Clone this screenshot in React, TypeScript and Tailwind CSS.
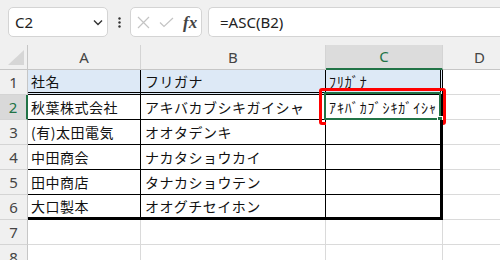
import React from 'react';

const rows = [
  { n: 1, a: '社名', b: 'フリガナ', c: 'ﾌﾘｶﾞﾅ' },
  { n: 2, a: '秋葉株式会社', b: 'アキバカブシキガイシャ', c: 'ｱｷﾊﾞｶﾌﾞｼｷｶﾞｲｼｬ' },
  { n: 3, a: '(有)太田電気', b: 'オオタデンキ', c: '' },
  { n: 4, a: '中田商会', b: 'ナカタショウカイ', c: '' },
  { n: 5, a: '田中商店', b: 'タナカショウテン', c: '' },
  { n: 6, a: '大口製本', b: 'オオグチセイホン', c: '' },
  { n: 7, a: '', b: '', c: '' },
  { n: 8, a: '', b: '', c: '' },
];

const ui = { fontFamily: '"Noto Sans", "Liberation Sans", sans-serif' };
const jp = { fontFamily: '"Noto Sans CJK JP", "Noto Sans", sans-serif' };

function RowCells({ r }: { r: (typeof rows)[number] }) {
  const inTable = r.n <= 6;
  const selected = r.n === 2;
  // bottom border for the table cells
  const bottom =
    r.n === 1
      ? 'border-b-[3px] border-double border-b-black'
      : r.n === 6
      ? 'border-b-[3px] border-b-black'
      : inTable
      ? 'border-b border-b-black'
      : 'border-b border-b-[#dadada]';
  const blue = r.n === 1 ? 'bg-[#dde9f6]' : 'bg-white';

  return (
    <div className="flex h-[25px]">
      <div
        className={
          selected
            ? 'w-[28px] shrink-0 flex items-center justify-center bg-[#d9d9d9] text-[#217346] border-r-2 border-r-[#217346] border-b border-b-[#d4d4d4] text-[15px]'
            : 'w-[28px] shrink-0 flex items-center justify-center bg-[#f0f0f0] text-[#444] border-r border-r-[#c6c6c6] border-b border-b-[#d4d4d4] text-[15px]'
        }
        style={ui}
      >
        {r.n}
      </div>
      <div
        className={`w-[113px] shrink-0 flex items-center pl-[3px] pt-[1px] whitespace-nowrap overflow-hidden text-[14px] tracking-[0.5px] text-[#111] ${blue} ${bottom} ${
          inTable ? 'border-r border-r-black' : 'border-r border-r-[#dadada]'
        }`}
        style={jp}
      >
        {r.a}
      </div>
      <div
        className={`w-[185px] shrink-0 flex items-center pl-[4px] pt-[1px] whitespace-nowrap overflow-hidden text-[14px] tracking-[0.5px] text-[#111] ${blue} ${bottom} ${
          inTable ? 'border-r border-r-black' : 'border-r border-r-[#dadada]'
        }`}
        style={jp}
      >
        {r.b}
      </div>
      <div
        className={`relative w-[117px] shrink-0 flex items-center pl-[3px] pt-[1px] whitespace-nowrap text-[14px] tracking-[0.9px] text-[#111] ${blue} ${bottom} ${
          inTable ? 'border-r-[3px] border-r-black' : 'border-r border-r-[#dadada]'
        }`}
        style={jp}
      >
        {r.c}
        {selected && (
          <>
            <div className="absolute -left-[2px] -top-[3px] -right-[1px] -bottom-[1px] border-2 border-[#217346]" />
            <div className="absolute -right-[3px] -bottom-[3px] w-[6px] h-[6px] bg-[#217346] border border-white" />
            <div className="absolute -left-[7px] -top-[7px] -right-[6px] -bottom-[6px] border-[3px] border-[#ff0000] rounded-[3px]" />
          </>
        )}
      </div>
      <div className="flex-1 bg-white border-b border-b-[#dadada]" />
    </div>
  );
}

export default function App() {
  return (
    <div className="w-[500px] h-[260px] overflow-hidden bg-[#f0f0f0] select-none" style={ui}>
      {/* formula bar */}
      <div className="h-[45px] flex items-start pt-[7px] pl-[8px] gap-0">
        <div className="w-[100px] h-[30px] bg-white border border-[#d4d4d4] rounded-[5px] flex items-center justify-between pl-[6px] pr-[4px]">
          <span className="text-[15px] text-[#222]">C2</span>
          <svg width="10" height="7" viewBox="0 0 10 7">
            <path d="M1 1.5 L5 5.5 L9 1.5" fill="none" stroke="#333" strokeWidth="1.4" />
          </svg>
        </div>
        <div className="w-[22px] h-[30px] flex items-center justify-center">
          <svg width="3" height="11" viewBox="0 0 3 11">
            <circle cx="1.5" cy="1.5" r="1.2" fill="#333" />
            <circle cx="1.5" cy="5.5" r="1.2" fill="#333" />
            <circle cx="1.5" cy="9.5" r="1.2" fill="#333" />
          </svg>
        </div>
        <div className="w-[72px] h-[30px] bg-white border border-[#d4d4d4] rounded-[5px] flex items-center pl-[6px] gap-[9px]">
          <svg width="13" height="13" viewBox="0 0 13 13">
            <path d="M1 1 L12 12 M12 1 L1 12" stroke="#c4c4c4" strokeWidth="1.2" fill="none" />
          </svg>
          <svg width="15" height="11" viewBox="0 0 15 11">
            <path d="M1 5.5 L5 9.5 L14 1" stroke="#c4c4c4" strokeWidth="1.2" fill="none" />
          </svg>
          <span
            className="text-[17px] italic font-bold text-[#444] leading-none"
            style={{ fontFamily: '"Liberation Serif", "DejaVu Serif", serif' }}
          >
            fx
          </span>
        </div>
        <div className="ml-[6px] flex-1 h-[30px] bg-white border border-r-0 border-[#d4d4d4] rounded-l-[5px] flex items-center pl-[11px]">
          <span className="text-[15px] text-[#222]">=ASC(B2)</span>
        </div>
      </div>

      {/* column headers */}
      <div className="flex h-[25px] text-[15px] text-[#444]">
        <div className="w-[28px] shrink-0 relative border-r border-r-[#c6c6c6] border-b border-b-[#c6c6c6]">
          <svg className="absolute right-[3px] bottom-[4px]" width="16" height="15" viewBox="0 0 16 15">
            <path d="M16 0 L16 15 L0 15 Z" fill="#d6d6d6" />
          </svg>
        </div>
        <div className="w-[113px] shrink-0 flex items-center justify-center border-r border-r-[#d4d4d4] border-b border-b-[#c6c6c6]">A</div>
        <div className="w-[185px] shrink-0 flex items-center justify-center border-r border-r-[#d4d4d4] border-b border-b-[#c6c6c6]">B</div>
        <div className="w-[117px] shrink-0 flex items-center justify-center bg-[#dcdcdc] text-[#217346] border-r border-r-[#d4d4d4] border-b-2 border-b-[#217346]">C</div>
        <div className="flex-1 flex items-center justify-start pl-[31px] border-b border-b-[#c6c6c6]">D</div>
      </div>

      {/* grid */}
      <div>
        {rows.map((r) => (
          <RowCells key={r.n} r={r} />
        ))}
      </div>
    </div>
  );
}
